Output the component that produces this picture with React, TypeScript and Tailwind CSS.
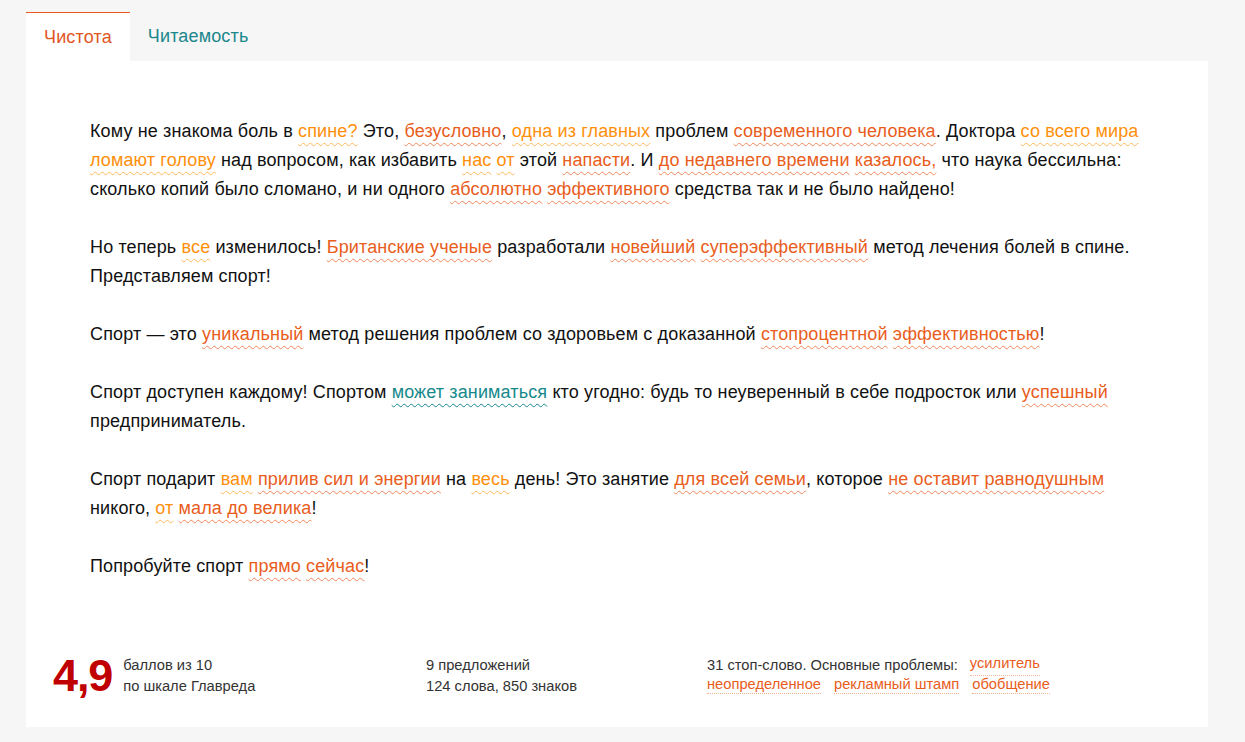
import type { ReactNode } from "react";

type Tone = "light" | "dark" | "teal";

function Mark({ tone, children }: { tone: Tone; children: ReactNode }) {
  if (tone === "light") {
    return (
      <span className="text-[#ff8f0a] underline decoration-wavy decoration-1 decoration-[#ffb85c] underline-offset-[5px]">
        {children}
      </span>
    );
  }
  if (tone === "teal") {
    return (
      <span className="text-[#16898c] underline decoration-wavy decoration-1 decoration-[#16898c] underline-offset-[5px]">
        {children}
      </span>
    );
  }
  return (
    <span className="text-[#e85d1c] underline decoration-wavy decoration-1 decoration-[#f2875a] underline-offset-[5px]">
      {children}
    </span>
  );
}

const L = ({ children }: { children: ReactNode }) => <Mark tone="light">{children}</Mark>;
const D = ({ children }: { children: ReactNode }) => <Mark tone="dark">{children}</Mark>;

function Problem({ children }: { children: ReactNode }) {
  return (
    <span className="text-[#e85d1c] border-b border-dotted border-[#f5b592] leading-[17px] inline-block">
      {children}
    </span>
  );
}

export default function App() {
  return (
    <div className="min-h-screen bg-[#f6f6f6] pt-3 pl-[26px] pr-[37px] pb-[14px] font-['Liberation_Sans',Arial,sans-serif] text-[#111]">
      {/* Tabs */}
      <div className="flex h-[49px] tracking-[0.15px]">
        <button className="bg-white border-t border-[#e8561e] px-[18px] text-[18px] text-[#e0561f]">
          Чистота
        </button>
        <button className="px-[18px] text-[18px] text-[#1a878c]">Читаемость</button>
      </div>

      {/* Panel */}
      <div className="bg-white">
        <div className="px-16 pt-[56px] pb-[74px] text-[18px] leading-[29px] tracking-[0.13px] space-y-[29px]">
          <p>
            Кому не знакома боль в <L>спине?</L> Это, <D>безусловно</D>, <L>одна из главных</L> проблем{" "}
            <D>современного человека</D>. Доктора <L>со всего мира ломают голову</L> над вопросом, как
            избавить <L>нас</L> <L>от</L> этой <D>напасти</D>. И <D>до недавнего времени</D>{" "}
            <D>казалось,</D> что наука бессильна: сколько копий было сломано, и ни одного{" "}
            <D>абсолютно</D> <D>эффективного</D> средства так и не было найдено!
          </p>
          <p>
            Но теперь <L>все</L> изменилось! <D>Британские ученые</D> разработали <D>новейший</D>{" "}
            <D>суперэффективный</D> метод лечения болей в спине. Представляем спорт!
          </p>
          <p>
            Спорт — это <D>уникальный</D> метод решения проблем со здоровьем с доказанной{" "}
            <D>стопроцентной</D> <D>эффективностью</D>!
          </p>
          <p>
            Спорт доступен каждому! Спортом <Mark tone="teal">может заниматься</Mark> кто угодно: будь то
            неуверенный в себе подросток или <D>успешный</D> предприниматель.
          </p>
          <p>
            Спорт подарит <L>вам</L> <D>прилив сил и энергии</D> на <L>весь</L> день! Это занятие{" "}
            <D>для всей семьи</D>, которое <D>не оставит равнодушным</D> никого, <L>от</L>{" "}
            <D>мала до велика</D>!
          </p>
          <p>
            Попробуйте спорт <D>прямо</D> <D>сейчас</D>!
          </p>
        </div>

        {/* Footer stats */}
        <div className="flex items-start pl-[27px] pb-[29px] text-[14.7px] leading-[21px] text-[#333]">
          <div className="flex w-[373px] items-start">
            <span className="text-[45px] leading-[44px] font-bold tracking-tight text-[#c00000] mr-[11px] mt-[-1px]">
              4,9
            </span>
            <div>
              <div>баллов из 10</div>
              <div>по шкале Главреда</div>
            </div>
          </div>
          <div className="w-[281px]">
            <div>9 предложений</div>
            <div>124 слова, 850 знаков</div>
          </div>
          <div>
            <div className="flex gap-3">
              <span>31 стоп-слово. Основные проблемы:</span>
              <Problem>усилитель</Problem>
            </div>
            <div className="flex gap-[13px]">
              <Problem>неопределенное</Problem>
              <Problem>рекламный штамп</Problem>
              <Problem>обобщение</Problem>
            </div>
          </div>
        </div>
      </div>
    </div>
  );
}
